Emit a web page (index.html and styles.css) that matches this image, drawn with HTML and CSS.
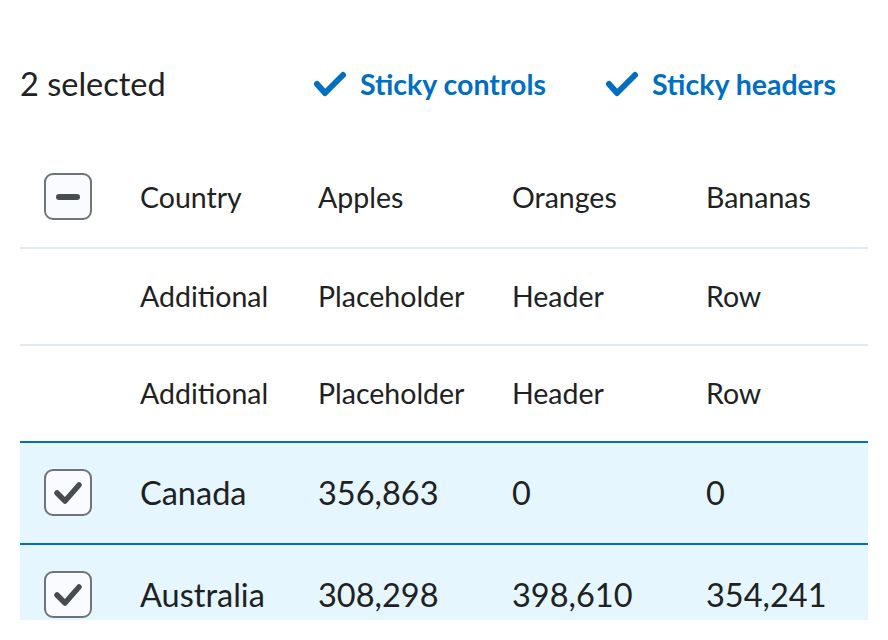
FILE: index.html
```html
<!DOCTYPE html>
<html>
<head>
<meta charset="utf-8">
<link rel="stylesheet" href="styles.css">
</head>
<body>
<div class="frame">
  <div class="controls">
    <div class="count">2 selected</div>
    <button class="toggle">
      <svg class="tick" viewBox="0 0 36 30" width="36" height="30"><polyline points="5,15 13,24 31,6" /></svg>
      <span>Sticky controls</span>
    </button>
    <button class="toggle">
      <svg class="tick" viewBox="0 0 36 30" width="36" height="30"><polyline points="5,15 13,24 31,6" /></svg>
      <span>Sticky headers</span>
    </button>
  </div>
  <table class="grid">
    <colgroup>
      <col class="c-sel"><col class="c-country"><col class="c-fruit"><col class="c-fruit"><col class="c-last">
    </colgroup>
    <thead>
      <tr>
        <th><span class="box"><span class="dash"></span></span></th>
        <th>Country</th><th>Apples</th><th>Oranges</th><th>Bananas</th>
      </tr>
      <tr>
        <th></th><th>Additional</th><th>Placeholder</th><th>Header</th><th>Row</th>
      </tr>
      <tr class="before-sel">
        <th></th><th>Additional</th><th>Placeholder</th><th>Header</th><th>Row</th>
      </tr>
    </thead>
    <tbody>
      <tr class="sel">
        <td><span class="box"><svg viewBox="0 0 44 44" width="44" height="44"><polyline points="11,22 19,30 33,14" /></svg></span></td>
        <td>Canada</td><td>356,863</td><td>0</td><td>0</td>
      </tr>
      <tr class="sel">
        <td><span class="box"><svg viewBox="0 0 44 44" width="44" height="44"><polyline points="11,22 19,30 33,14" /></svg></span></td>
        <td>Australia</td><td>308,298</td><td>398,610</td><td>354,241</td>
      </tr>
    </tbody>
  </table>
</div>
</body>
</html>
```

FILE: styles.css
```css
html, body {
  margin: 0;
  padding: 0;
  background: #ffffff;
}

body {
  font-family: Lato, "Open Sans", sans-serif;
  color: #202122;
}

.frame {
  margin: 20px;
  width: 848px;
  height: 600px;
  overflow: hidden;
}

.controls {
  display: flex;
  align-items: center;
  height: 48px;
  margin-top: 40px;
}

.count {
  flex: 0 0 292px;
  font-size: 32.5px;
  line-height: 48px;
  color: #202122;
  white-space: nowrap;
}

.toggle {
  flex: 0 0 auto;
  display: flex;
  align-items: center;
  gap: 12px;
  padding: 0;
  margin: 0 58px 0 0;
  border: none;
  background: none;
  font-family: Lato, sans-serif;
  font-weight: 700;
  font-size: 28.5px;
  line-height: 48px;
  color: #006fbf;
  white-space: nowrap;
  cursor: pointer;
}

.tick polyline {
  fill: none;
  stroke: #006fbf;
  stroke-width: 6;
  stroke-linecap: round;
  stroke-linejoin: round;
}

.grid {
  margin-top: 39px;
  width: 848px;
  border-collapse: collapse;
  table-layout: fixed;
}

.c-sel { width: 96px; }
.c-country { width: 178px; }
.c-fruit { width: 194px; }
.c-last { width: 186px; }

.grid th,
.grid td {
  padding: 26px 24px 27px 24px;
  text-align: left;
  vertical-align: middle;
  white-space: nowrap;
  border-bottom: 2px solid #e3e9f1;
}

.grid th {
  font-weight: 400;
  font-size: 28.5px;
  line-height: 42px;
  color: #202122;
}

.grid td {
  font-size: 32.5px;
  line-height: 42px;
  color: #202122;
}

.grid tr.before-sel th {
  border-bottom-color: #006fbf;
}

.grid tr.sel td {
  background: #e6f6fe;
  border-bottom-color: #006fbf;
}

.box {
  display: flex;
  align-items: center;
  justify-content: center;
  box-sizing: border-box;
  width: 48px;
  height: 47px;
  border: 2px solid #6e7477;
  border-radius: 9px;
  background: #f9fbff;
}

.box svg polyline {
  fill: none;
  stroke: #494c4e;
  stroke-width: 5.5;
  stroke-linecap: round;
  stroke-linejoin: round;
}

.dash {
  display: block;
  width: 24px;
  height: 6px;
  border-radius: 3px;
  background: #494c4e;
}
```
